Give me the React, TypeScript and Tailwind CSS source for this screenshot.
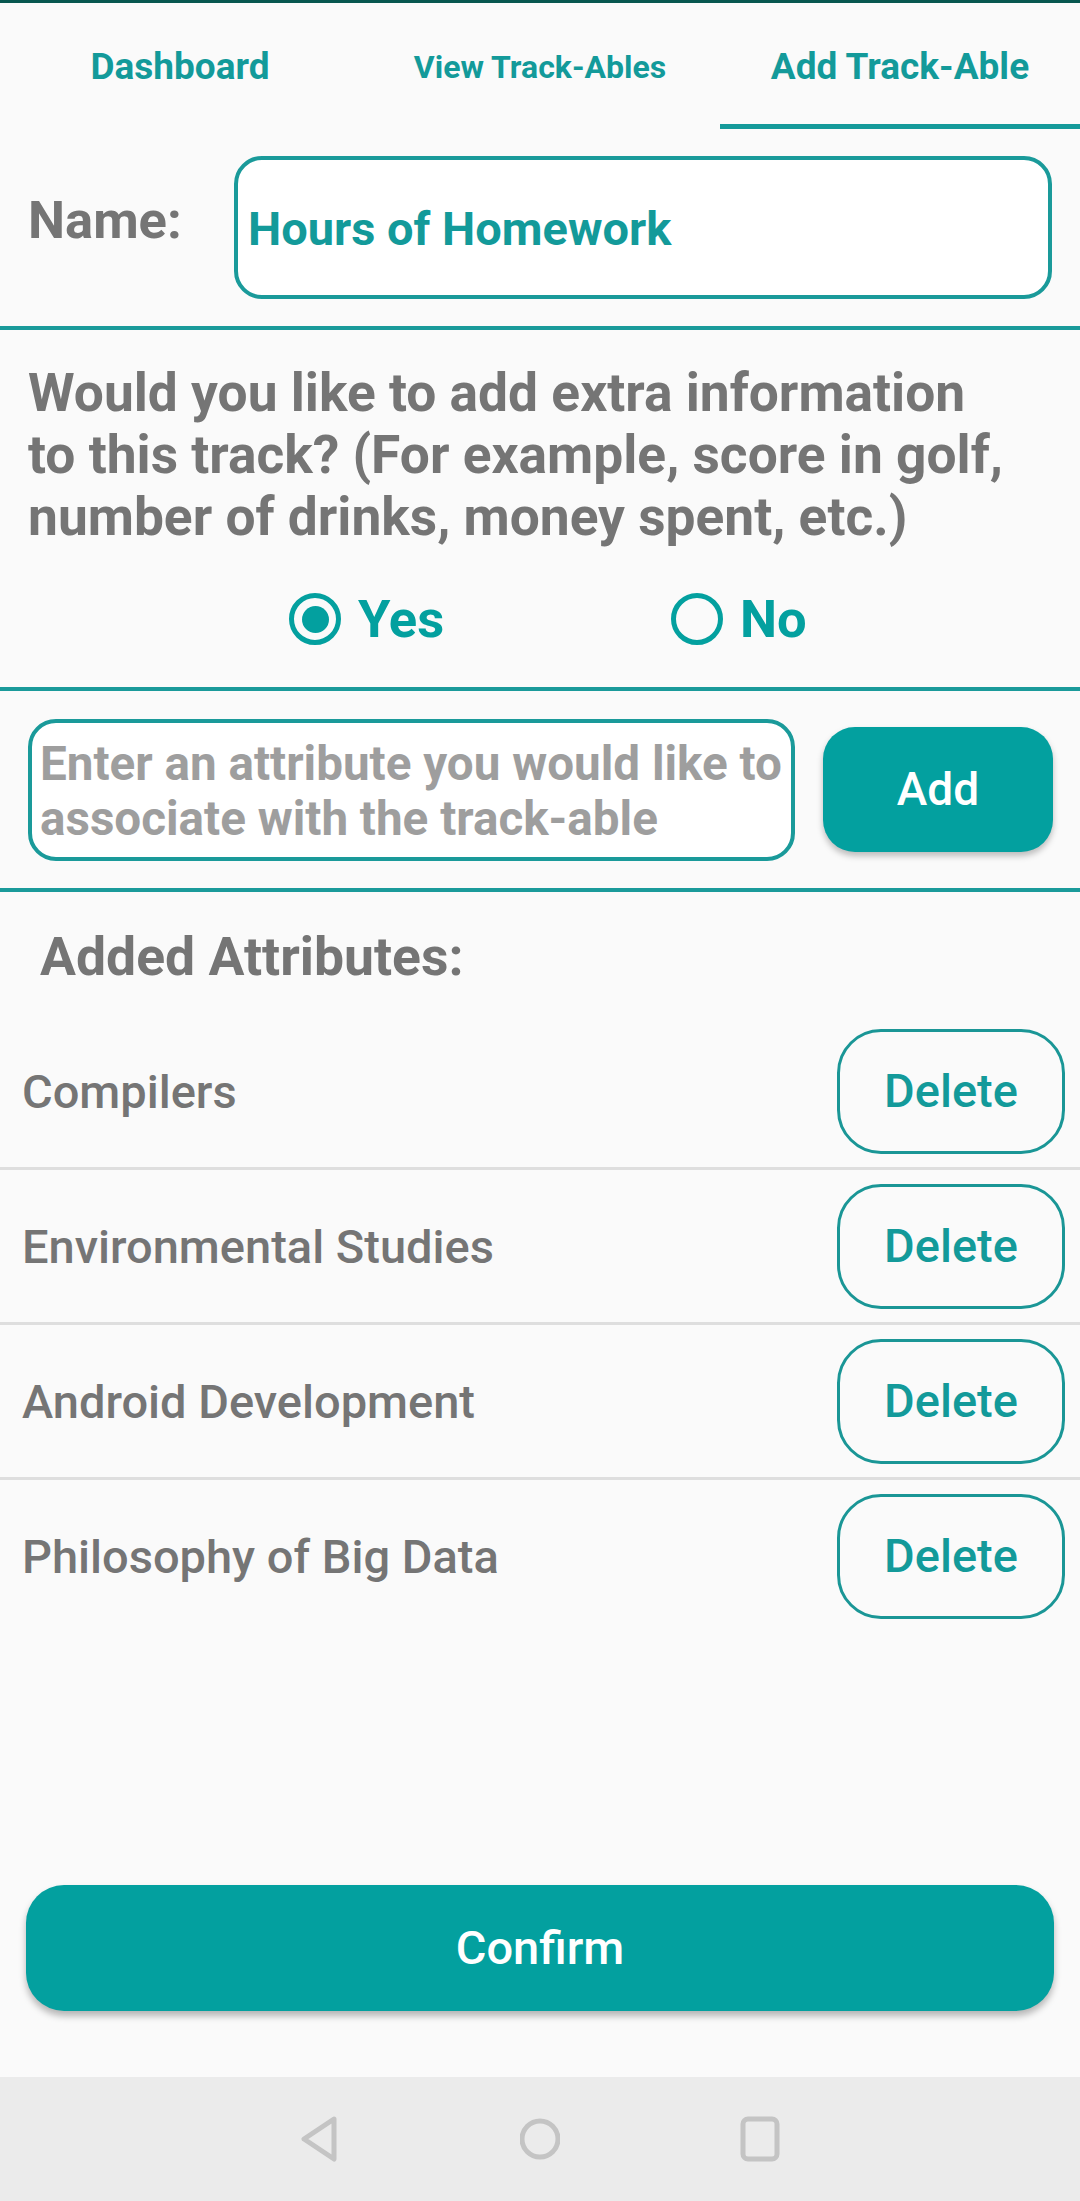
import { useState } from 'react';

const tabs = ['Dashboard', 'View Track-Ables', 'Add Track-Able'];
const attributes = ['Compilers', 'Environmental Studies', 'Android Development', 'Philosophy of Big Data'];

function Radio({ checked }: { checked: boolean }) {
  return (
    <span className="w-[52px] h-[52px] rounded-full border-[5px] border-[#03a09f] flex items-center justify-center shrink-0">
      {checked && <span className="w-[27px] h-[27px] rounded-full bg-[#03a09f]" />}
    </span>
  );
}

export default function App() {
  const [extra, setExtra] = useState(true);
  const [items, setItems] = useState(attributes);

  return (
    <div className="min-h-screen bg-[#fafafa] flex flex-col font-['Roboto','Noto_Sans',sans-serif]">
      <div className="h-[3px] bg-[#07574f]" />

      {/* Tabs */}
      <nav className="flex h-[126px]">
        {tabs.map((tab, idx) => (
          <div key={tab} className="flex-1 flex flex-col">
            <div className="flex-1 flex items-center justify-center pt-[7px]">
              <span
                className={
                  idx === 1
                    ? 'text-[32px] font-bold text-[#139a9a]'
                    : 'text-[37px] font-bold text-[#139a9a]'
                }
              >
                {tab}
              </span>
            </div>
            <div className={idx === 2 ? 'h-[5px] bg-[#159a9a]' : 'h-[5px]'} />
          </div>
        ))}
      </nav>

      {/* Name */}
      <div className="h-[197px] flex items-center pl-[28px] pr-[28px]">
        <span className="w-[206px] text-[52.5px] font-bold text-[#757575] leading-none pb-[14px]">Name:</span>
        <div className="flex-1 h-[143px] rounded-[28px] border-[4px] border-[#1a9a9a] bg-white flex items-center pl-[10px] pt-[4px]">
          <span className="text-[47px] font-bold text-[#139a9a]">Hours of Homework</span>
        </div>
      </div>
      <div className="h-[4px] bg-[#1a9a9a]" />

      {/* Extra info question */}
      <p className="pt-[32px] px-[28px] text-[53.3px] leading-[62px] font-bold text-[#757575] whitespace-nowrap">
        Would you like to add extra information
        <br />
        to this track? (For example, score in golf,
        <br />
        number of drinks, money spent, etc.)
      </p>
      <div className="mt-[40px] h-[62px] flex items-center pl-[289px] mb-[37px]">
        <button className="w-[382px] flex items-center gap-[17px]" onClick={() => setExtra(true)}>
          <Radio checked={extra} />
          <span className="text-[52.5px] font-bold text-[#03a09f]">Yes</span>
        </button>
        <button className="flex items-center gap-[17px]" onClick={() => setExtra(false)}>
          <Radio checked={!extra} />
          <span className="text-[52.5px] font-bold text-[#03a09f]">No</span>
        </button>
      </div>
      <div className="h-[4px] bg-[#1a9a9a]" />

      {/* Attribute entry */}
      <div className="h-[197px] flex items-center gap-[28px] pl-[28px] pr-[27px]">
        <div className="w-[767px] h-[142px] rounded-[28px] border-[4px] border-[#1a9a9a] bg-white flex items-center pl-[8px] overflow-hidden">
          <span className="text-[47.6px] leading-[55px] font-bold text-[#9e9e9e] pt-[4px] whitespace-nowrap">
            Enter an attribute you would like to
            <br />
            associate with the track-able
          </span>
        </div>
        <button className="w-[230px] h-[125px] rounded-[32px] bg-[#03a09f] text-white text-[46px] font-medium shadow-[0_4px_6px_rgba(0,0,0,0.25)]">
          Add
        </button>
      </div>
      <div className="h-[4px] bg-[#1a9a9a]" />

      {/* Added attributes */}
      <h2 className="pt-[34px] pb-[27px] pl-[40px] text-[53.5px] leading-[62px] font-bold text-[#757575]">
        Added Attributes:
      </h2>
      <ul>
        {items.map((item, idx) => (
          <li key={item}>
            <div className="h-[152px] flex items-center justify-between pl-[22px] pr-[15px]">
              <span className="text-[47px] font-medium text-[#757575] pt-[3px]">{item}</span>
              <button
                className="w-[228px] h-[125px] rounded-[44px] border-[3px] border-[#1a9696] text-[47px] font-medium text-[#139a9a]"
                onClick={() => setItems(items.filter((i) => i !== item))}
              >
                Delete
              </button>
            </div>
            {idx < items.length - 1 && <div className="h-[3px] bg-[#dedede]" />}
          </li>
        ))}
      </ul>

      <div className="flex-1" />

      <button className="mx-[26px] h-[126px] rounded-[38px] bg-[#03a09f] text-white text-[47px] font-medium shadow-[0_5px_7px_rgba(0,0,0,0.28)]">
        Confirm
      </button>
      <div className="h-[66px]" />

      {/* System nav bar */}
      <div className="h-[124px] bg-[#ebebeb] flex items-center justify-center gap-[180px]">
        <svg width="40" height="46" viewBox="0 0 40 46" fill="none">
          <path d="M34 3 L4 23 L34 43 Z" stroke="#c4c4c4" strokeWidth="5" strokeLinejoin="round" />
        </svg>
        <svg width="40" height="46" viewBox="0 0 40 46" fill="none">
          <circle cx="20" cy="23" r="18" stroke="#c4c4c4" strokeWidth="5" />
        </svg>
        <svg width="40" height="46" viewBox="0 0 40 46" fill="none">
          <rect x="3" y="3" width="34" height="40" rx="5" stroke="#c4c4c4" strokeWidth="5" />
        </svg>
      </div>
    </div>
  );
}
